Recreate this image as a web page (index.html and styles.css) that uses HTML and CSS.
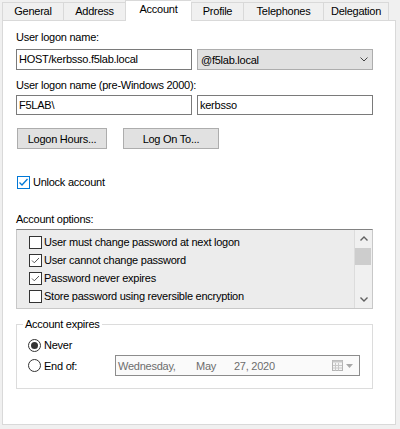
FILE: index.html
```html
<!DOCTYPE html>
<html lang="en">

<head>
    <meta charset="UTF-8">
    <title>Account Properties</title>
    <link rel="stylesheet" href="styles.css">
</head>

<body>
    <div class="dialog">
        <div class="tabs">
            <div class="tab tab-general">General</div>
            <div class="tab tab-address">Address</div>
            <div class="tab tab-account active">Account</div>
            <div class="tab tab-profile">Profile</div>
            <div class="tab tab-phones">Telephones</div>
            <div class="tab tab-delegation">Delegation</div>
            <div class="tab-filler"></div>
        </div>

        <div class="panel">
            <div class="label">User logon name:</div>
            <div class="row row-logon">
                <div class="textbox">HOST/kerbsso.f5lab.local</div>
                <div class="combo">
                    <span>@f5lab.local</span>
                    <svg class="chevron" width="8" height="5" viewBox="0 0 8 5"><path d="M0.5 0.5 L4 4 L7.5 0.5" fill="none" stroke="#444" stroke-width="1"/></svg>
                </div>
            </div>

            <div class="label label-pre">User logon name (pre-Windows 2000):</div>
            <div class="row row-pre">
                <div class="textbox short">F5LAB\</div>
                <div class="textbox short">kerbsso</div>
            </div>

            <div class="buttons">
                <button class="btn btn-hours">Logon Hours...</button>
                <button class="btn btn-logon">Log On To...</button>
            </div>

            <div class="check-row unlock">
                <span class="checkbox blue">
                    <svg width="11" height="11" viewBox="0 0 11 11"><path d="M1.5 5.5 L4 8 L9.5 2" fill="none" stroke="#0078d7" stroke-width="1.3"/></svg>
                </span>
                <span>Unlock account</span>
            </div>

            <div class="label label-options">Account options:</div>
            <div class="listbox">
                <div class="items">
                    <div class="item"><span class="checkbox"></span>User must change password at next logon</div>
                    <div class="item"><span class="checkbox"><svg width="11" height="11" viewBox="0 0 11 11"><path d="M2 5.5 L4.3 7.8 L9 3" fill="none" stroke="#555" stroke-width="1"/></svg></span>User cannot change password</div>
                    <div class="item"><span class="checkbox"><svg width="11" height="11" viewBox="0 0 11 11"><path d="M2 5.5 L4.3 7.8 L9 3" fill="none" stroke="#555" stroke-width="1"/></svg></span>Password never expires</div>
                    <div class="item"><span class="checkbox"></span>Store password using reversible encryption</div>
                </div>
                <div class="scrollbar">
                    <div class="arrow">
                        <svg width="8" height="5" viewBox="0 0 8 5"><path d="M0.5 4.5 L4 1 L7.5 4.5" fill="none" stroke="#606060" stroke-width="1.4"/></svg>
                    </div>
                    <div class="thumb"></div>
                    <div class="track"></div>
                    <div class="arrow">
                        <svg width="8" height="5" viewBox="0 0 8 5"><path d="M0.5 0.5 L4 4 L7.5 0.5" fill="none" stroke="#606060" stroke-width="1.4"/></svg>
                    </div>
                </div>
            </div>

            <fieldset class="expires">
                <legend>Account expires</legend>
                <div class="radio-row never">
                    <span class="radio on"></span>
                    <span>Never</span>
                </div>
                <div class="radio-row endof">
                    <span class="radio"></span>
                    <span class="endof-label">End of:</span>
                    <div class="datepicker">
                        <span class="day">Wednesday,</span>
                        <span class="month">May</span>
                        <span>27, 2020</span>
                        <svg class="cal" width="11" height="11" viewBox="0 0 11 11">
                            <rect x="0.5" y="0.5" width="10" height="10" fill="#f4f4f4" stroke="#b4b4b4"/>
                            <rect x="0.5" y="0.5" width="10" height="2" fill="#c8c8c8"/>
                            <path d="M3.5 3 V10.5 M6.5 3 V10.5 M1 5.5 H10 M1 8 H10" stroke="#c8c8c8" stroke-width="1"/>
                        </svg>
                        <svg class="drop" width="7" height="4" viewBox="0 0 7 4"><polygon points="0,0 7,0 3.5,4" fill="#a8a8a8"/></svg>
                    </div>
                </div>
            </fieldset>
        </div>
    </div>
</body>

</html>
```

FILE: styles.css
```css
body {
    margin: 0;
    background-color: #f0f0f0;
    font-family: "Liberation Sans", Arial, sans-serif;
    font-size: 11px;
    letter-spacing: -0.25px;
    color: #000;
}

.dialog {
    width: 400px;
    height: 429px;
}

/* tab strip */
.tabs {
    display: flex;
    align-items: flex-end;
    height: 21px;
    width: 394px;
    margin-left: 2px;
}

.tab {
    box-sizing: border-box;
    height: 19px;
    padding-top: 2px;
    line-height: 13px;
    text-align: center;
    background-color: #f0f0f0;
    border: 1px solid #d9d9d9;
    border-right: none;
}

.tab.active {
    height: 21px;
    background-color: #fff;
    border-bottom: none;
}

.tab-general { width: 61px; }
.tab-address { width: 62px; }
.tab-account { width: 66px; }
.tab-profile { width: 52px; }
.tab-phones { width: 80px; }

.tab-delegation {
    width: 66px;
    border-right: 1px solid #d9d9d9;
}

.tab-filler {
    flex: 1;
    height: 1px;
    background-color: #d9d9d9;
}

/* page body */
.panel {
    box-sizing: border-box;
    width: 394px;
    height: 404px;
    margin-left: 2px;
    padding: 10px 0 0 13px;
    background-color: #fff;
    border: 1px solid #d9d9d9;
    border-top: none;
}

.label {
    line-height: 13px;
}

.label-pre {
    margin-top: 9px;
}

.label-options {
    margin-top: 24px;
}

.row {
    display: flex;
    gap: 5px;
}

.row-logon {
    margin-top: 5px;
}

.row-pre {
    margin-top: 3px;
}

.textbox {
    box-sizing: border-box;
    width: 176px;
    height: 21px;
    padding-left: 2px;
    line-height: 19px;
    background-color: #fff;
    border: 1px solid #7a7a7a;
}

.textbox.short {
    height: 20px;
    line-height: 18px;
}

.combo {
    box-sizing: border-box;
    width: 176px;
    height: 21px;
    padding: 0 4px 0 3px;
    display: flex;
    justify-content: space-between;
    align-items: center;
    background-color: #e1e1e1;
    border: 1px solid #adadad;
}

.buttons {
    display: flex;
    gap: 16px;
    margin: 13px 0 0 1px;
}

.btn {
    box-sizing: border-box;
    height: 21px;
    padding: 0;
    font: inherit;
    letter-spacing: inherit;
    color: #000;
    background-color: #e1e1e1;
    border: 1px solid #adadad;
}

.btn-hours { width: 90px; }
.btn-logon { width: 96px; }

.checkbox {
    box-sizing: border-box;
    width: 13px;
    height: 13px;
    flex-shrink: 0;
    display: flex;
    align-items: center;
    justify-content: center;
    background-color: #fff;
    border: 1px solid #333;
}

.checkbox.blue {
    border-color: #0078d7;
}

.check-row {
    display: flex;
    align-items: center;
    gap: 3px;
    height: 14px;
}

.unlock {
    margin: 26px 0 0 1px;
}

/* account options list */
.listbox {
    box-sizing: border-box;
    width: 357px;
    height: 80px;
    margin-top: 3px;
    display: flex;
    background-color: #ececec;
    border: 1px solid #c8c8c8;
    border-top-color: #828282;
}

.items {
    flex: 1;
    padding: 3px 0 0 12px;
}

.item {
    display: flex;
    align-items: center;
    gap: 2px;
    height: 18px;
}

.scrollbar {
    width: 17px;
    display: flex;
    flex-direction: column;
    background-color: #f0f0f0;
    border-left: 1px solid #dcdcdc;
}

.arrow {
    height: 17px;
    display: flex;
    align-items: center;
    justify-content: center;
}

.thumb {
    height: 17px;
    margin: 1px 1px 0 0;
    background-color: #cdcdcd;
}

.track {
    flex: 1;
}

/* account expires group */
.expires {
    box-sizing: border-box;
    width: 357px;
    height: 71px;
    min-width: 0;
    margin: 9px 0 0 0;
    padding: 0 0 0 6px;
    border: 1px solid #dcdcdc;
}

.expires legend {
    padding: 0 2px;
    line-height: 13px;
}

.radio-row {
    display: flex;
    align-items: center;
    gap: 3px;
    margin-left: 5px;
}

.never {
    height: 20px;
    margin-top: 4px;
}

.endof {
    height: 21px;
}

.radio {
    box-sizing: border-box;
    width: 13px;
    height: 13px;
    display: flex;
    align-items: center;
    justify-content: center;
    background-color: #fff;
    border: 1px solid #333;
    border-radius: 50%;
}

.radio.on::after {
    content: "";
    width: 7px;
    height: 7px;
    border-radius: 50%;
    background-color: #333;
}

.endof-label {
    width: 68px;
}

.datepicker {
    box-sizing: border-box;
    width: 245px;
    height: 21px;
    padding: 0 6px 0 2px;
    display: flex;
    align-items: center;
    color: #6d6d6d;
    background-color: #fafafa;
    border: 1px solid #8c8c8c;
}

.datepicker .day {
    width: 78px;
}

.datepicker .month {
    width: 38px;
}

.datepicker .cal {
    margin-left: auto;
}

.datepicker .drop {
    margin-left: 3px;
}
```
